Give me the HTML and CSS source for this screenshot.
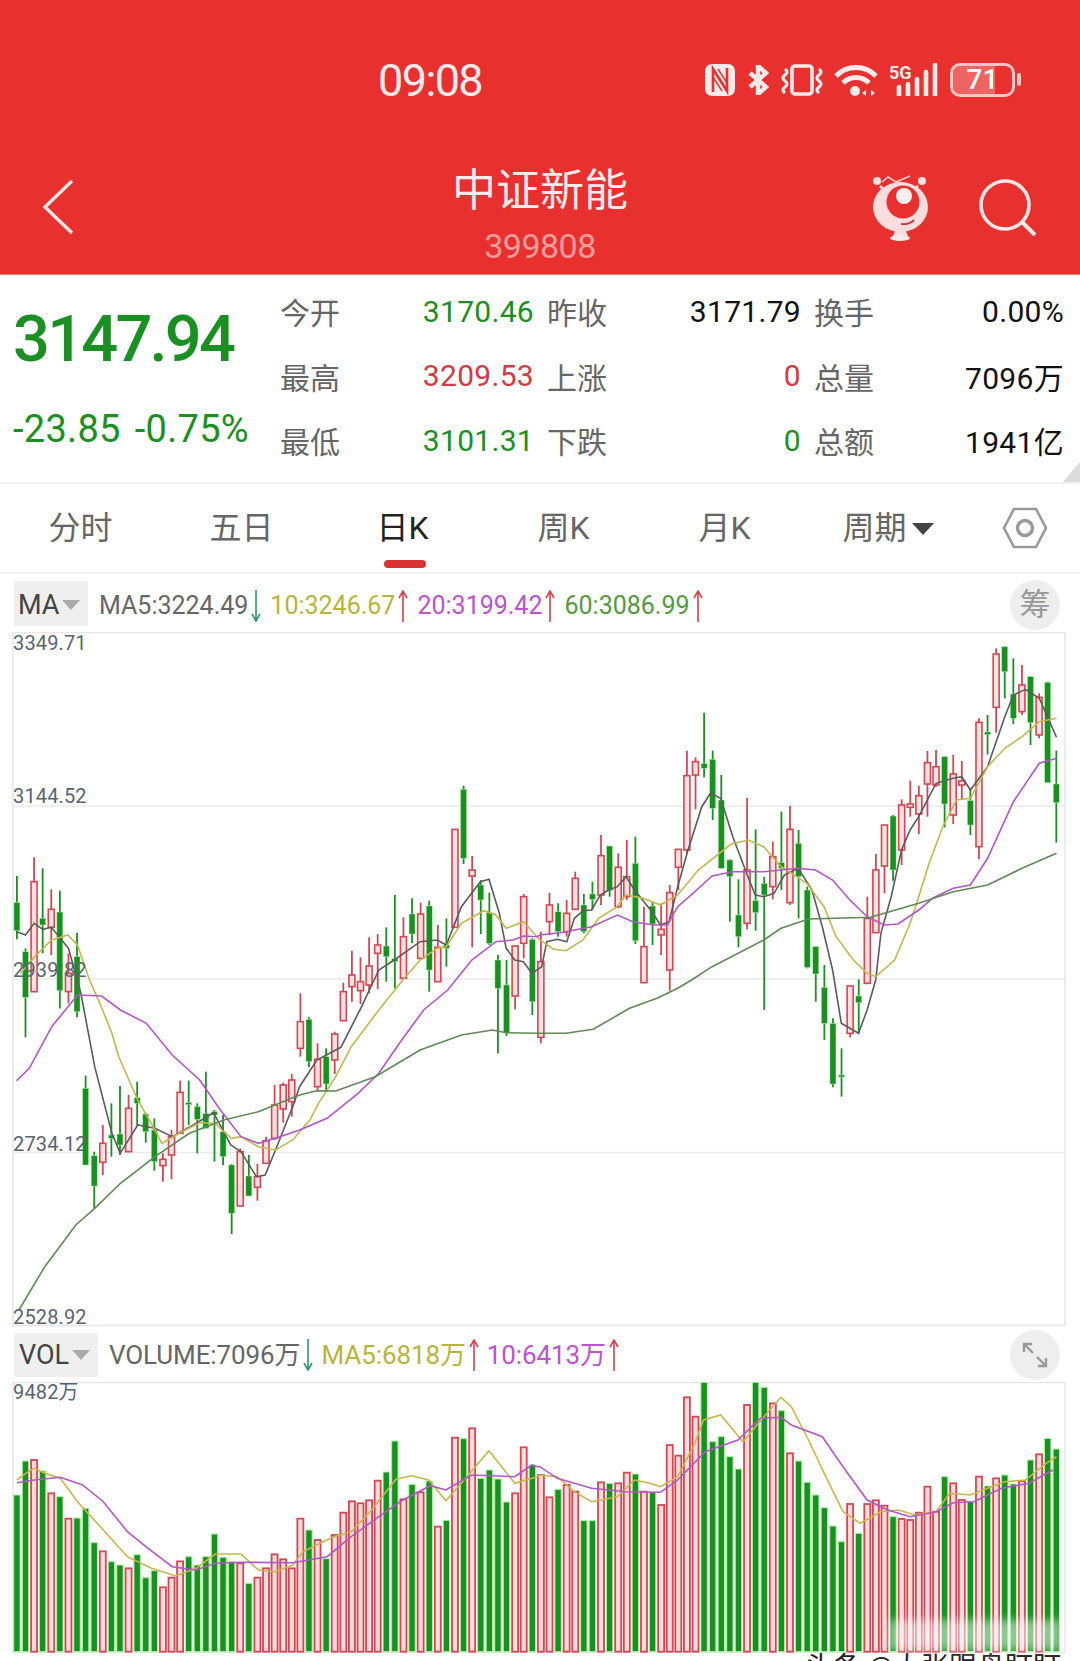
FILE: index.html
```html
<!DOCTYPE html>
<html lang="zh-CN">

<head>
    <meta charset="UTF-8">
    <meta name="viewport" content="width=device-width, initial-scale=1.0">
    <title>中证新能 399808</title>
    <link rel="stylesheet" href="styles.css">
</head>

<body>
    <header class="topbar">
        <div class="status">
            <span class="clock">09:08</span>
            <div class="status-icons">
                <svg class="ic-nfc" viewBox="0 0 30 32"><rect width="30" height="32" rx="7" fill="#fdeaea"/><path d="M8 28V5l14 22V4" fill="none" stroke="#e8302f" stroke-width="2.600"/><path d="M13 5l9 14M8 13l9 14" fill="none" stroke="#e8302f" stroke-width="1.400"/></svg>
                <svg class="ic-bt" viewBox="0 0 21 30"><path d="M2 8l16 14-8 7V1l8 7L2 22" fill="none" stroke="#fdeaea" stroke-width="4.400"/></svg>
                <svg class="ic-vib" viewBox="0 0 44 32"><rect x="12" y="2" width="20" height="28" rx="3" fill="none" stroke="#fdeaea" stroke-width="3.600"/><path d="M5 5q4 3 0 6t0 6 0 6 0 6M39 5q4 3 0 6t0 6 0 6 0 6" fill="none" stroke="#fdeaea" stroke-width="3.200"/></svg>
                <svg class="ic-wifi" viewBox="0 0 44 34"><path d="M2 13a28 28 0 0 1 40 0M9 20a18 18 0 0 1 26 0" fill="none" stroke="#fdeaea" stroke-width="5"/><circle cx="21" cy="28" r="5" fill="#fdeaea"/><path d="M32 27l-4 3 4 3zM37 27l4 3-4 3z" fill="#fdeaea"/></svg>
                <svg class="ic-sig" viewBox="0 0 50 33"><text x="0" y="16" class="sig-text">5G</text><path d="M10 24v8M19 21v11M28 16v16M37 9v23M46 2v30" stroke="#fdeaea" stroke-width="4.600" stroke-linecap="round"/></svg>
                <div class="battery">
                    <div class="battery-body"><div class="battery-level"></div><span class="battery-num">71</span></div>
                    <div class="battery-nub"></div>
                </div>
            </div>
        </div>
        <div class="nav">
            <svg class="ic-back" viewBox="0 0 32 56"><path d="M30 2L3 28l27 26" fill="none" stroke="#fde6e6" stroke-width="3.400"/></svg>
            <div class="nav-title">
                <div class="name">中证新能</div>
                <div class="code">399808</div>
            </div>
            <div class="nav-icons">
                <svg class="ic-robot" viewBox="0 0 62 72">
                    <path d="M14 10l6-5 8 5 14-6" fill="none" stroke="#fbd0d0" stroke-width="1.600"/>
                    <path d="M12 14l6 6M50 14l-6 6" stroke="#fde0e0" stroke-width="2.500"/>
                    <circle cx="9" cy="9" r="4" fill="#fde0e0"/>
                    <circle cx="54" cy="9" r="4" fill="#fde0e0"/>
                    <ellipse cx="32.500" cy="35" rx="27.500" ry="25" fill="#fcdcdc"/>
                    <circle cx="35" cy="30" r="16.500" fill="#e8302f"/>
                    <circle cx="36" cy="24" r="8" fill="#fdeeee"/>
                    <path d="M33 52q8 1 13-4" fill="none" stroke="#c03a40" stroke-width="1.800"/>
                    <path d="M27 59h11l2 5H25z" fill="#fcdcdc"/>
                    <ellipse cx="32" cy="66" rx="10" ry="3" fill="#fdeaea"/>
                </svg>
                <svg class="ic-search" viewBox="0 0 62 62"><circle cx="29" cy="29" r="24" fill="none" stroke="#fde6e6" stroke-width="3.600"/><path d="M46 46l13 13" stroke="#fde6e6" stroke-width="4"/></svg>
            </div>
        </div>
    </header>

    <section class="quote">
        <div class="quote-main">
            <div class="last">3147.94</div>
            <div class="change"><span>-23.85</span><span>-0.75%</span></div>
        </div>
        <div class="quote-grid">
            <span class="q-label">今开</span><span class="q-val down">3170.46</span>
            <span class="q-label">昨收</span><span class="q-val">3171.79</span>
            <span class="q-label">换手</span><span class="q-val">0.00%</span>
            <span class="q-label">最高</span><span class="q-val up">3209.53</span>
            <span class="q-label">上涨</span><span class="q-val up">0</span>
            <span class="q-label">总量</span><span class="q-val">7096万</span>
            <span class="q-label">最低</span><span class="q-val down">3101.31</span>
            <span class="q-label">下跌</span><span class="q-val down">0</span>
            <span class="q-label">总额</span><span class="q-val">1941亿</span>
        </div>
        <div class="corner"></div>
    </section>

    <nav class="tabs">
        <div class="tab">分时</div>
        <div class="tab">五日</div>
        <div class="tab active">日K</div>
        <div class="tab">周K</div>
        <div class="tab">月K</div>
        <div class="tab tab-period">周期<span class="tab-caret"></span></div>
        <div class="tab-gear">
            <svg class="ic-gear" viewBox="0 0 46 42"><path d="M2 21L12 2h22l10 19-10 19H12z" fill="none" stroke="#999" stroke-width="2.600"/><circle cx="23" cy="21" r="7.500" fill="none" stroke="#999" stroke-width="3.400"/></svg>
        </div>
    </nav>

    <div class="legend">
        <div class="pick">MA<span class="pick-caret"></span></div>
        <div class="legend-items">
            <span class="c-gray">MA5:3224.49</span><svg class="arrow a-down" viewBox="0 0 10 32"><path d="M5 0v31M1 24l4 7 4-7"/></svg>
            <span class="c-olive">10:3246.67</span><svg class="arrow a-up" viewBox="0 0 10 32"><path d="M5 32V1M1 8l4-7 4 7"/></svg>
            <span class="c-purple">20:3199.42</span><svg class="arrow a-up" viewBox="0 0 10 32"><path d="M5 32V1M1 8l4-7 4 7"/></svg>
            <span class="c-green">60:3086.99</span><svg class="arrow a-up" viewBox="0 0 10 32"><path d="M5 32V1M1 8l4-7 4 7"/></svg>
        </div>
        <div class="round-btn btn-chips">筹</div>
    </div>

    <div class="chart kline">
        <svg id="klineSvg" viewBox="12 632 1054 695"></svg>
        <span class="y-label" id="y1">3349.71</span>
        <span class="y-label" id="y2">3144.52</span>
        <span class="y-label" id="y3">2939.82</span>
        <span class="y-label" id="y4">2734.12</span>
        <span class="y-label" id="y5">2528.92</span>
    </div>

    <div class="legend legend-vol">
        <div class="pick pick-vol">VOL<span class="pick-caret"></span></div>
        <div class="legend-items">
            <span class="c-gray">VOLUME:7096万</span><svg class="arrow a-down" viewBox="0 0 10 32"><path d="M5 0v31M1 24l4 7 4-7"/></svg>
            <span class="c-olive">MA5:6818万</span><svg class="arrow a-up" viewBox="0 0 10 32"><path d="M5 32V1M1 8l4-7 4 7"/></svg>
            <span class="c-purple">10:6413万</span><svg class="arrow a-up" viewBox="0 0 10 32"><path d="M5 32V1M1 8l4-7 4 7"/></svg>
        </div>
        <div class="round-btn">
            <svg class="ic-expand" viewBox="0 0 28 28"><path d="M3 11V3h8M3 3l9 9M25 17v8h-8M25 25l-9-9" fill="none" stroke="#999" stroke-width="2.400"/></svg>
        </div>
    </div>

    <div class="chart vol">
        <svg id="volSvg" viewBox="12 1382 1054 271"></svg>
        <span class="y-label" id="y6">9482万</span>
        <div class="smudge"></div>
    </div>

    <div class="credit">头条 @大张跟盘盯盯</div>

    <script src="chart.js"></script>
</body>

</html>
```
FILE: styles.css
```css
body, html {
    margin: 0;
    padding: 0;
    height: 100%;
    overflow: hidden;
    background-color: #fff;
    font-family: Roboto, "Noto Sans CJK SC", sans-serif;
}

.topbar {
    height: 274px;
    background-color: #e8302f;
    color: #fdeaea;
    box-shadow: 0 1px 1px #b98;
}

.status {
    height: 150px;
    position: relative;
    display: flex;
    justify-content: flex-end;
    padding: 62px 59px 0 0;
    box-sizing: border-box;
}

.clock {
    position: absolute;
    left: 378px;
    top: 54px;
    font-size: 45px;
    letter-spacing: -1.6px;
    line-height: 53px;
}

.status-icons {
    display: flex;
    align-items: center;
    height: 35px;
}

.ic-nfc { width: 30px; height: 32px; margin-right: 13px; }
.ic-bt { width: 21px; height: 30px; margin-right: 11px; }
.ic-vib { width: 44px; height: 32px; margin-right: 10px; }
.ic-wifi { width: 44px; height: 34px; margin-right: 11px; }
.ic-sig { width: 50px; height: 33px; margin-right: 11px; }

.sig-text {
    font-size: 18px;
    font-weight: 700;
    fill: #fdeaea;
}

.battery {
    display: flex;
    align-items: center;
}

.battery-body {
    position: relative;
    display: flex;
    align-items: center;
    justify-content: center;
    width: 65px;
    height: 34px;
    border: 3px solid #f8c4c4;
    border-radius: 10px;
    box-sizing: border-box;
}

.battery-level {
    position: absolute;
    left: 0;
    top: 0;
    bottom: 0;
    width: 72%;
    border-radius: 7px 0 0 7px;
    background-color: rgba(255, 255, 255, 0.25);
}

.battery-num {
    position: relative;
    font-size: 28px;
    font-weight: 500;
    line-height: 28px;
    color: #fff;
}

.battery-nub {
    width: 4px;
    height: 13px;
    margin-left: 2px;
    border-radius: 2px;
    background-color: #f8c4c4;
}

.nav {
    height: 124px;
    display: grid;
    grid-template-columns: 1fr auto 1fr;
    box-sizing: border-box;
    padding: 0 42px 0 42px;
}

.ic-back {
    width: 32px;
    height: 56px;
    margin-top: 29px;
}

.nav-title {
    text-align: center;
}

.name {
    font-size: 44px;
    line-height: 60px;
    margin-top: 11px;
    color: #fdeaea;
}

.code {
    font-size: 34px;
    line-height: 40px;
    margin-top: 5px;
    letter-spacing: -0.5px;
    color: #f59c9c;
}

.nav-icons {
    display: flex;
    justify-content: flex-end;
}

.ic-robot {
    width: 62px;
    height: 72px;
    margin-top: 22px;
    margin-right: 46px;
}

.ic-search {
    width: 62px;
    height: 62px;
    margin-top: 26px;
}

.quote {
    position: relative;
    height: 208px;
    margin-top: 2px;
    display: flex;
    border-bottom: 2px solid #f2f2f2;
    box-sizing: border-box;
}

.quote-main {
    width: 265px;
    flex-shrink: 0;
    padding-left: 13px;
    box-sizing: border-box;
    color: #1a8f22;
}

.last {
    font-size: 65px;
    font-weight: 500;
    letter-spacing: -2.800px;
    line-height: 70px;
    margin-top: 28px;
}

.change {
    display: flex;
    gap: 14px;
    font-size: 38px;
    letter-spacing: 0.3px;
    line-height: 42px;
    margin-top: 34px;
}

.quote-grid {
    display: grid;
    grid-template-columns: 75px 194px 73px 194px 73px 190px;
    grid-auto-rows: 64.500px;
    padding-top: 3px;
    align-items: center;
    font-size: 30px;
}

.q-label {
    text-align: right;
    color: #666;
}

.q-val {
    text-align: right;
    letter-spacing: 0.3px;
    color: #111;
}

.q-val.up { color: #d23a44; }
.q-val.down { color: #1a8f22; }

.corner {
    position: absolute;
    right: 0;
    bottom: 0;
    width: 17px;
    height: 20px;
    background-color: #dcdcdc;
    clip-path: polygon(100% 0, 100% 100%, 0 100%);
}

.tabs {
    height: 90px;
    display: flex;
    align-items: center;
    border-bottom: 2px solid #f2f2f2;
    box-sizing: border-box;
}

.tab {
    position: relative;
    width: 161px;
    text-align: center;
    font-size: 32px;
    line-height: 88px;
    color: #666;
}

.tab.active {
    color: #222;
}

.tab.active::after {
    content: "";
    position: absolute;
    left: 62px;
    bottom: 4px;
    width: 42px;
    height: 8px;
    border-radius: 4px;
    background-color: #d93232;
}

.tab-period {
    padding-left: 5px;
    box-sizing: border-box;
}

.tab-caret {
    display: inline-block;
    margin-left: 5px;
    vertical-align: 4px;
    border-left: 11px solid transparent;
    border-right: 11px solid transparent;
    border-top: 12px solid #444;
}

.tab-gear {
    flex: 1;
    display: flex;
    justify-content: center;
    padding-left: 3px;
}

.ic-gear {
    width: 46px;
    height: 42px;
}

.legend {
    height: 58px;
    display: flex;
    align-items: center;
    padding: 0 20px 0 14px;
    box-sizing: border-box;
}

.pick {
    width: 74px;
    height: 45px;
    background-color: #efefef;
    font-size: 27px;
    line-height: 49px;
    color: #444;
    padding-left: 4px;
    box-sizing: border-box;
    flex-shrink: 0;
}

.pick-caret {
    display: inline-block;
    margin-left: 3px;
    vertical-align: 4px;
    border-left: 9px solid transparent;
    border-right: 9px solid transparent;
    border-top: 10px solid #aaa;
}

.legend-items {
    flex: 1;
    display: flex;
    align-items: center;
    margin-left: 11px;
    font-size: 25px;
    line-height: 42px;
    padding-top: 6px;
}

.arrow {
    width: 10px;
    height: 32px;
    margin: 0 9px 0 3px;
    fill: none;
    stroke-width: 1.600;
}

.a-down { stroke: #2a9a6a; }
.a-up { stroke: #d8404a; }

.c-gray { color: #666; }
.c-olive { color: #b9b33c; }
.c-purple { color: #bd52cf; }
.c-green { color: #55993f; }

.round-btn {
    width: 50px;
    height: 50px;
    border-radius: 50%;
    background-color: #eee;
    color: #999;
    font-size: 31px;
    line-height: 50px;
    text-align: center;
    flex-shrink: 0;
}

.btn-chips {
    margin-top: 4px;
}

.chart {
    position: relative;
    width: 1054px;
    margin-left: 12px;
}

.chart svg {
    display: block;
    width: 100%;
    height: 100%;
}

.kline {
    height: 695px;
}

.vol {
    height: 271px;
}

.y-label {
    position: absolute;
    left: 1px;
    font-size: 20px;
    letter-spacing: 0.15px;
    line-height: 20px;
    color: #5a6470;
}

#y1 { top: 1px; }
#y2 { top: 154px; }
#y3 { top: 328px; }
#y4 { top: 502px; }
#y5 { top: 675px; }
#y6 { top: 0; }

.legend-vol {
    height: 55px;
}

.pick-vol {
    width: 84px;
    height: 44px;
    line-height: 44px;
    border-radius: 3px;
    padding-left: 5px;
}

.legend-vol .legend-items {
    font-size: 26px;
    letter-spacing: -0.1px;
    padding-top: 0;
}

.legend-vol .arrow {
    margin-right: 8px;
}

.ic-expand {
    width: 28px;
    height: 28px;
    margin-top: 11px;
}

.smudge {
    position: absolute;
    right: 4px;
    top: 238px;
    width: 174px;
    height: 30px;
    background-color: rgba(255, 255, 255, 0.5);
    filter: blur(4px);
}

.credit {
    margin: 1px 0 0 805px;
    font-size: 28px;
    line-height: 28px;
    color: #222;
    white-space: nowrap;
}
```
FILE: chart.js
```js
// values below were read off at 2.904x across and 3x down, hence the scale helpers
const RED = "#d34652", PINK = "#fde0e0", GREEN = "#1a8f22", HALO = "#a8f5a0";

function kx(i) { return 16.9 + 8.59 * i; }
function lx(x) { return x / 2.904; }
function ky(z) { return 620 + z / 3; }
function vy(z) { return 1320 + z / 3; }

// type, high, body top, body bottom, low
let candles = [
    ["G",768,848,932,958],["G",985,995,1132,1252],["R",712,785,1115,1115],["G",745,895,915,1000],
    ["R",808,868,922,1005],["G",812,876,1112,1165],["R",1000,1060,1115,1150],["G",938,1010,1175,1192],
    ["G",1367,1405,1635,1635],["G",1595,1607,1698,1765],["R",1515,1570,1627,1665],["G",1450,1545,1555,1610],
    ["G",1398,1542,1575,1605],["R",1425,1465,1595,1595],["G",1385,1433,1450,1515],["G",1480,1482,1535,1568],
    ["G",1495,1530,1625,1652],["R",1600,1618,1637,1685],["R",1530,1550,1605,1678],["R",1382,1417,1540,1540],
    ["G",1382,1448,1453,1515],["G",1450,1460,1498,1600],["G",1355,1480,1525,1525],["G",1470,1475,1485,1625],
    ["G",1485,1535,1610,1635],["G",1632,1635,1780,1842],["R",1585,1595,1758,1758],["G",1605,1668,1728,1728],
    ["R",1632,1670,1702,1742],["R",1550,1562,1630,1630],["R",1395,1455,1555,1560],["R",1388,1395,1467,1508],
    ["R",1362,1380,1445,1490],["R",1120,1205,1285,1310],["G",1192,1198,1325,1342],["R",1270,1318,1400,1410],
    ["G",1285,1310,1392,1415],["R",1235,1242,1320,1362],["R",1088,1115,1202,1202],["R",992,1065,1100,1145],
    ["R",1012,1085,1112,1152],["R",952,1038,1095,1120],["R",942,975,1000,1108],["G",922,978,1010,1085],
    ["G",825,1015,1025,1105],["R",892,950,1075,1075],["G",835,882,942,970],["R",848,882,1015,1020],
    ["G",842,858,1050,1115],["R",915,982,1085,1085],["G",895,975,985,1040],["R",628,628,922,922],
    ["G",497,508,715,732],["R",708,750,768,982],["G",780,795,840,942],["G",818,878,970,975],
    ["G",1005,1020,1105,1300],["G",1020,1095,1238,1248],["R",975,978,1128,1168],["R",822,830,970,1015],
    ["G",955,958,1145,1185],
    ["R",935,1025,1252,1270],["R",818,855,905,945],["G",850,875,935,950],["R",840,880,935,950],
    ["R",755,775,868,868],["G",822,855,935,940],["G",785,822,838,870],["R",645,707,825,855],
    ["G",678,678,812,830],["R",700,742,860,865],["R",660,770,830,840],["G",650,730,962,972],
    ["R",860,980,1088,1088],["G",845,858,912,975],["R",850,928,945,1005],["R",795,818,1050,1112],
    ["R",688,688,742,810],["R",392,467,690,700],["R",412,425,465,568],["G",278,430,445,472],
    ["G",392,418,565,600],["G",465,540,745,745],["G",718,720,770,905],["G",778,885,950,982],
    ["R",533,750,910,928],["G",628,842,878,932],["G",770,790,825,1170],["R",665,710,800,838],
    ["G",575,728,745,810],["R",558,628,848,855],["G",630,670,770,895],["G",800,810,1042,1045],
    ["G",980,980,1062,1145],["G",1035,1102,1210,1260],["G",1195,1210,1392,1402],["G",1285,1365,1370,1430],
    ["R",1098,1098,1240,1252],["G",1078,1128,1148,1240],["R",830,895,1090,1090],["R",702,750,938,938],
    ["R",615,615,738,820],["G",585,588,750,782],["R",538,555,690,735],["R",482,552,562,590],
    ["R",497,527,582,642],["R",393,428,492,590],["R",390,440,495,500],["G",410,410,552,622],
    ["R",405,462,585,612],["R",423,483,495,540],["G",505,542,615,645],["R",295,307,680,718],
    ["G",285,336,344,403],["R",85,102,262,338],["G",80,80,155,235],["G",115,222,295,312],
    ["R",135,195,275,285],["G",170,170,308,375],["R",220,232,345,355],["G",185,187,488,488],
    ["G",392,492,548,668]
];

let volBars = [
    "G525","G423","R420","G453","R520","G530","R596","G594","G565","G668","R694","G725","G735","R745",
    "G704","G773","G752","R802","R773","R724","G710","G735","G710","G642","G712","G725","R730","G790",
    "R773","R745","R703","R718","R745","R596","G630","R660","G716","R645","R578","R544","R550","R541",
    "R482","G456","G363","R538","G493","R517","G483","R620","G601","R353","G356","R325","G475","G450",
    "G477","G546","R520","R382","G435",
    "R465","R532","G508","R495","R515","G602","G602","R487","G490","R490","R458","G462","R515","G517",
    "R555","R375","R407","R232","R290","G187","G365","G350","G410","G447","R255","G187","G202","R250",
    "G272","R400","G423","G487","G525","G563","G618","G665","R552","G640","R552","R541","R557","G590",
    "R597","R600","R578","R500","R575","G470","R490","R540","G545","R470","G498","R475","G465","G492",
    "R483","G420","R403","G355","G387"
];

// each line is two runs: left half of the chart, then right half (x restarts at 1568)
let maLines = [
    { color: "#5b5b5b", left: [49,935,74,945,99,910,124,928,149,922,199,985,235,1120,275,1340,325,1540,349,1600,400,1515,450,1525,500,1550,570,1510,620,1478,670,1575,700,1595,745,1670,770,1665,800,1590,850,1460,870,1400,920,1320,990,1282,1050,1160,1100,1050,1145,1020,1220,965,1270,960,1296,975,1340,860,1395,785,1420,778,1450,880,1470,985,1495,1020,1520,1025,1545,1060],
      right: [5,1040,20,965,50,958,78,965,100,895,125,872,150,870,175,825,200,810,225,800,250,770,275,810,325,875,350,915,375,905,400,800,430,690,470,560,495,520,525,535,560,650,600,760,625,825,650,830,680,820,710,765,750,745,790,810,820,920,850,1050,875,1210,925,1240,950,1170,975,1080,990,940,1020,830,1050,690,1075,630,1100,590,1150,490,1200,475,1225,470,1250,510,1300,440,1350,290,1375,225,1410,208,1450,235,1500,352] },
    { color: "#c4b64e", left: [60,1060,100,1010,150,960,197,945,225,975,260,1080,290,1150,325,1240,345,1310,400,1440,450,1530,470,1570,520,1540,580,1508,625,1510,650,1535,672,1555,700,1550,750,1580,800,1590,850,1560,900,1500,925,1450,975,1370,1020,1280,1100,1170,1170,1080,1220,1020,1270,985,1296,980,1340,910,1405,872,1440,885,1470,925,1520,905,1560,950],
      right: [0,960,40,988,75,992,125,960,170,895,225,860,250,825,300,835,350,855,400,825,460,750,555,672,605,660,650,680,700,740,775,790,825,860,860,950,910,1020,950,1060,975,1070,1030,1020,1075,910,1100,830,1130,730,1170,620,1210,540,1250,535,1300,440,1350,385,1400,350,1450,305,1500,295] },
    { color: "#b057c4", left: [48,1382,85,1345,150,1220,225,1125,295,1128,350,1170,425,1210,500,1305,580,1380,640,1470,700,1550,750,1570,800,1555,870,1530,950,1495,1040,1420,1100,1360,1160,1270,1230,1170,1300,1110,1370,1020,1440,965,1490,960,1520,948,1560,950],
      right: [0,945,60,938,150,920,225,885,270,905,330,915,370,915,400,860,450,815,500,768,560,755,650,755,750,745,800,750,850,780,900,840,950,890,1000,915,1040,912,1100,870,1140,835,1200,805,1250,795,1300,715,1375,545,1450,430,1500,415] },
    { color: "#5f8a55", left: [55,2070,130,1940,220,1815,275,1765,350,1690,450,1610,550,1540,650,1500,750,1475,870,1425,920,1412,975,1413,1090,1370,1220,1290,1340,1245,1430,1230,1470,1238,1560,1240],
      right: [0,1240,75,1240,155,1228,260,1165,340,1135,400,1105,440,1080,500,1040,650,960,700,925,780,897,960,892,1000,880,1100,850,1200,815,1300,795,1400,745,1500,700] }
];

let volLines = [
    { color: "#c8b64a", left: [49,480,75,460,99,445,130,460,175,475,225,545,300,630,370,710,440,745,510,768,570,745,625,702,700,702,750,750,800,755,850,735,880,695,930,670,970,650,1020,635,1075,575,1150,478,1195,467,1245,480,1295,542,1340,490,1420,392,1495,490,1560,470],
      right: [0,465,50,470,100,515,150,545,225,530,275,480,320,490,350,500,400,470,450,370,475,300,525,285,590,365,650,290,700,232,730,260,780,360,830,470,880,575,930,610,990,575,1040,570,1090,585,1150,575,1190,520,1250,525,1300,505,1350,485,1410,480,1470,430,1500,410] },
    { color: "#b455c8", left: [49,488,100,480,175,472,240,495,300,545,370,635,430,685,500,740,570,750,625,730,700,727,850,728,950,710,1020,650,1100,590,1170,540,1250,497,1295,510,1370,465,1495,470,1545,435,1560,440],
      right: [0,440,50,475,100,490,150,505,250,515,350,517,400,480,480,395,575,360,640,295,700,292,730,315,820,350,880,440,950,540,1010,570,1075,590,1150,575,1200,548,1260,545,1340,505,1420,490,1490,450] }
];

function polyline(line, toY) {
    let pts = [];
    function add(run, offset) {
        for (let i = 0; i < run.length; i += 2) {
            pts.push(lx(run[i] + offset).toFixed(1) + "," + toY(run[i + 1]).toFixed(1));
        }
    }
    add(line.left, 0);
    add(line.right, 1568);
    return '<polyline points="' + pts.join(" ") + '" fill="none" stroke="' + line.color + '" stroke-width="1.600"/>';
}

function drawKline() {
    let html = '<rect x="13" y="632.500" width="1052" height="693" fill="none" stroke="#e6e6e6" stroke-width="1.500"/>';
    [806, 979, 1152.5].forEach(function(y) {
        html += '<line x1="13" x2="1065" y1="' + y + '" y2="' + y + '" stroke="#eaeaea" stroke-width="1.500"/>';
    });
    candles.forEach(function(c, i) {
        let x = kx(i), color = c[0] == "R" ? RED : GREEN;
        let top = ky(c[2]), h = Math.max(ky(c[3]) - top, 2);
        html += '<line x1="' + x + '" x2="' + x + '" y1="' + ky(c[1]) + '" y2="' + ky(c[4]) + '" stroke="' + color + '" stroke-width="1.800"/>';
        if (c[0] == "R") {
            html += '<rect x="' + (x - 3) + '" y="' + top + '" width="6" height="' + h + '" fill="' + PINK + '" stroke="' + color + '" stroke-width="1.600"/>';
        } else {
            html += '<rect x="' + (x - 3) + '" y="' + top + '" width="6" height="' + h + '" fill="' + color + '" stroke="' + HALO + '" stroke-width="0.500"/>';
        }
    });
    maLines.forEach(function(line) { html += polyline(line, ky); });
    document.getElementById("klineSvg").innerHTML = html;
}

function drawVolume() {
    let html = '<rect x="13" y="1382.500" width="1052" height="270" fill="none" stroke="#e6e6e6" stroke-width="1.500"/>';
    let base = vy(995);
    volBars.forEach(function(b, i) {
        let x = kx(i), top = vy(parseInt(b.slice(1)));
        if (b[0] == "R") {
            html += '<rect x="' + (x - 3) + '" y="' + top + '" width="6" height="' + (base - top) + '" fill="#ffdcdc" stroke="' + RED + '" stroke-width="1.800"/>';
        } else {
            html += '<rect x="' + (x - 3.2) + '" y="' + top + '" width="6.400" height="' + (base - top) + '" fill="' + GREEN + '" stroke="' + HALO + '" stroke-width="1"/>';
        }
    });
    volLines.forEach(function(line) { html += polyline(line, vy); });
    document.getElementById("volSvg").innerHTML = html;
}

drawKline();
drawVolume();
```
